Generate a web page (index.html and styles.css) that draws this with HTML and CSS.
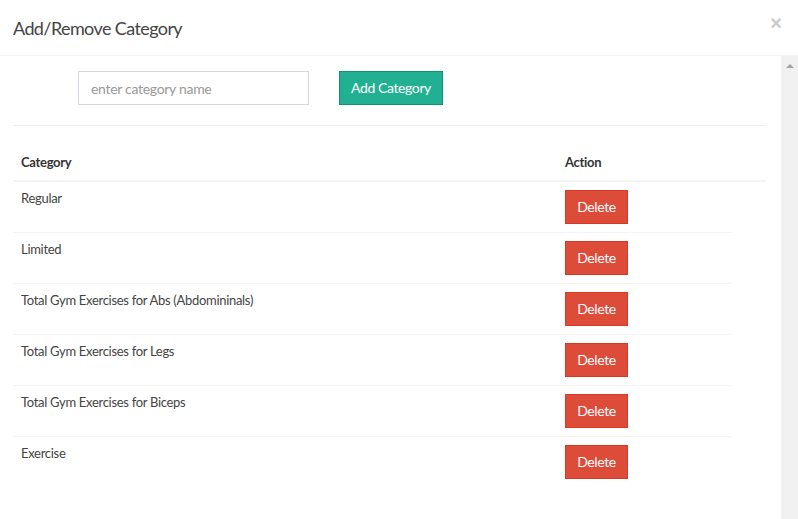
FILE: index.html
```html
<!DOCTYPE html>
<html>
<head>
<meta charset="utf-8">
<link rel="stylesheet" href="styles.css">
</head>
<body>
<div class="modal">
  <div class="modal-header">
    <h4 class="modal-title">Add/Remove Category</h4>
    <span class="close">&times;</span>
  </div>
  <div class="modal-main">
    <div class="modal-body">
      <div class="add-row">
        <input class="cat-input" type="text" placeholder="enter category name">
        <button class="btn btn-add">Add Category</button>
      </div>
      <hr class="sep">
      <div class="table">
        <div class="thead">
          <div class="col-cat">Category</div>
          <div class="col-act">Action</div>
        </div>
        <div class="trow">
          <div class="col-cat">Regular</div>
          <div class="col-act"><button class="btn btn-del">Delete</button></div>
        </div>
        <div class="trow">
          <div class="col-cat">Limited</div>
          <div class="col-act"><button class="btn btn-del">Delete</button></div>
        </div>
        <div class="trow">
          <div class="col-cat">Total Gym Exercises for Abs (Abdomininals)</div>
          <div class="col-act"><button class="btn btn-del">Delete</button></div>
        </div>
        <div class="trow">
          <div class="col-cat">Total Gym Exercises for Legs</div>
          <div class="col-act"><button class="btn btn-del">Delete</button></div>
        </div>
        <div class="trow">
          <div class="col-cat">Total Gym Exercises for Biceps</div>
          <div class="col-act"><button class="btn btn-del">Delete</button></div>
        </div>
        <div class="trow">
          <div class="col-cat">Exercise</div>
          <div class="col-act"><button class="btn btn-del">Delete</button></div>
        </div>
      </div>
    </div>
    <div class="scroll-rail">
      <span class="scroll-up"></span>
    </div>
  </div>
</div>
</body>
</html>
```

FILE: styles.css
```css
* { box-sizing: border-box; }
html, body {
  margin: 0;
  padding: 0;
  background: #fff;
  height: 100%;
  overflow: hidden;
}
body {
  font-family: "Lato", "Liberation Sans", sans-serif;
  font-size: 13px;
  letter-spacing: -0.3px;
  color: #444;
}
.modal {
  display: flex;
  flex-direction: column;
  height: 519px;
}
.modal-header {
  display: flex;
  align-items: center;
  justify-content: space-between;
  height: 56px;
  padding: 0 16px 0 13px;
  border-bottom: 1px solid #f4f4f4;
}
.modal-title {
  margin: 0;
  font-size: 18px;
  font-weight: 400;
  letter-spacing: -0.6px;
  color: #444;
  line-height: 26px;
}
.close {
  font-size: 20px;
  color: #cbcbcb;
  font-family: "Liberation Sans", sans-serif;
  font-weight: 700;
  letter-spacing: 0;
  margin-top: -8px;
}
.modal-main {
  flex: 1;
  display: flex;
}
.modal-body {
  flex: 1;
  padding: 15px 15px 0 13px;
}
.scroll-rail {
  width: 17px;
  background: #f1f1f1;
  display: flex;
  justify-content: center;
  padding-top: 8px;
}
.scroll-up {
  width: 0;
  height: 0;
  border-left: 4px solid transparent;
  border-right: 4px solid transparent;
  border-bottom: 4px solid #a3a3a3;
}
.add-row {
  display: flex;
  align-items: center;
  padding-left: 65px;
  gap: 30px;
}
.cat-input {
  width: 231px;
  height: 34px;
  border: 1px solid #d2d6de;
  padding: 0 12px;
  font-family: inherit;
  font-size: 14px;
  letter-spacing: -0.3px;
  color: #555;
  outline: none;
}
.cat-input::placeholder { color: #999; }
.btn {
  font-family: inherit;
  font-size: 14px;
  letter-spacing: -0.4px;
  color: #fff;
  border-radius: 0;
  cursor: pointer;
  padding: 0 0 2px;
}
.btn-add {
  width: 104px;
  height: 34px;
  background: #21b192;
  border: 1px solid #13906f;
}
.sep {
  margin: 20px 0 0;
  border: 0;
  border-top: 1px solid #eee;
}
.table {
  margin-top: 18px;
}
.thead, .trow {
  display: flex;
}
.thead {
  border-bottom: 2px solid #f4f4f4;
  font-weight: 700;
  color: #333;
}
.thead > div, .trow > div {
  padding: 8px;
  line-height: 20px;
}
.trow > .col-cat {
  padding-top: 6px;
}
.col-cat { width: 544px; }
.col-act { flex: 1; }
.trow {
  margin-right: 34px;
}
.trow + .trow {
  border-top: 1px solid #f4f4f4;
}
.btn-del {
  width: 63px;
  height: 34px;
  background: #dd4b39;
  border: 1px solid #d73925;
}
```
